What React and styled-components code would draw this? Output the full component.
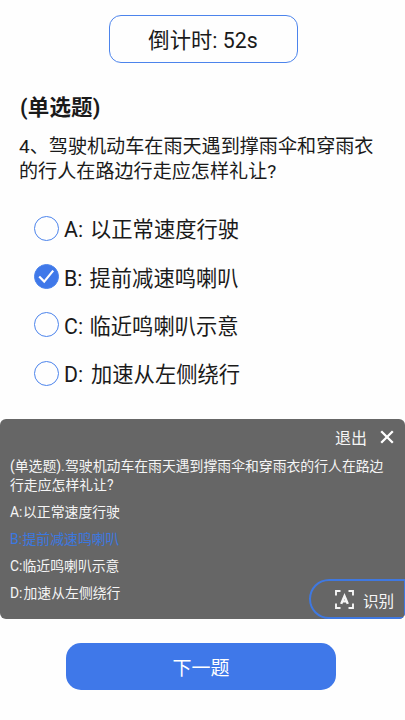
import React from "react";
import styled, { createGlobalStyle } from "styled-components";

const GlobalStyle = createGlobalStyle`
    * {
        box-sizing: border-box;
    }

    body {
        margin: 0;
        background: #fefefe;
        color: #1a1a1a;
        font-family: "Noto Sans CJK SC", "Noto Sans", sans-serif;
    }

    button {
        font-family: inherit;
        padding: 0;
    }
`;

const Page = styled.div`
    display: flex;
    flex-direction: column;
    width: 405px;
    height: 720px;
    padding-top: 15px;
    overflow: hidden;
`;

const Timer = styled.div`
    display: flex;
    align-items: center;
    justify-content: center;
    align-self: center;
    width: 189px;
    height: 48px;
    margin-left: 1px;
    border: 1.4px solid #4c84ec;
    border-radius: 12px;
    font-size: 21.3px;
    line-height: 30px;
`;

const Question = styled.section`
    padding: 28px 0 0 19px;
`;

const Kind = styled.h1`
    margin: 0 0 0 1px;
    font-size: 21.5px;
    font-weight: 700;
    line-height: 30px;
    letter-spacing: 0.2px;
`;

const Title = styled.p`
    margin: 12px 0 0;
    font-size: 19.1px;
    line-height: 25px;
    white-space: nowrap;
`;

const Latin = styled.span`
    font-family: Roboto, sans-serif;
    line-height: 1;
`;

const Prefix = styled.span`
    display: inline-block;
    width: ${props => props.$width}px;
    font-family: Roboto, "Noto Sans CJK SC", sans-serif;
    line-height: 1;
    white-space: pre;
`;

const Options = styled.div`
    display: flex;
    flex-direction: column;
    padding: 21px 0 0 34px;
`;

const Option = styled.div`
    display: flex;
    align-items: center;
    height: 48.4px;
    font-size: 21.3px;
    line-height: 30px;
    white-space: nowrap;
`;

const Radio = styled.span`
    display: flex;
    align-items: center;
    justify-content: center;
    width: 25px;
    height: 25px;
    margin-right: 5px;
    border: 1.4px solid #4c84ec;
    border-radius: 50%;
    background: ${props => (props.$checked ? "#3f78e9" : "transparent")};
`;

const Panel = styled.section`
    display: flex;
    flex-direction: column;
    height: 200px;
    margin-top: 21px;
    border-radius: 6px;
    background: #666;
    color: #f5f5f5;
    overflow: hidden;
`;

const PanelBar = styled.div`
    display: flex;
    align-items: center;
    justify-content: flex-end;
    gap: 13px;
    height: 37px;
    padding-right: 11px;
    font-size: 16px;
`;

const PanelTitle = styled.p`
    margin: 0;
    padding-left: 10px;
    font-size: 13.85px;
    line-height: 19px;
    white-space: nowrap;
`;

const PanelFooter = styled.div`
    display: flex;
    justify-content: space-between;
    align-items: flex-end;
    flex: 1;
`;

const Answers = styled.div`
    align-self: flex-start;
    padding: 4px 0 0 10px;
`;

const Answer = styled.div`
    height: 27.2px;
    font-size: 13.85px;
    line-height: 27.2px;
    color: ${props => (props.$active ? "#3b78e0" : "inherit")};
`;

const ScanButton = styled.button`
    display: flex;
    align-items: center;
    gap: 9px;
    width: 96px;
    height: 40px;
    padding: 2px 0 0 24px;
    border: 2px solid #3f78e0;
    border-right-width: 1px;
    border-radius: 20px 0 0 20px;
    background: transparent;
    color: #f5f5f5;
    font-size: 15.6px;
`;

const NextButton = styled.button`
    align-self: center;
    width: 270px;
    height: 47px;
    margin: 24px 0 0 -3px;
    border: 0;
    border-radius: 15px;
    background: #3f78e9;
    color: #fff;
    font-size: 19px;
`;

const CheckIcon = () => (
    <svg width="23" height="23" viewBox="0 0 23 23" fill="none" style={{ flex: "none" }}>
        <path d="M4.2 11.4l5 5.2 9-11" stroke="#fff" strokeWidth="2.2" />
    </svg>
);

const CloseIcon = () => (
    <svg width="14" height="14" viewBox="0 0 14 14">
        <path d="M1.2 1.2l11.6 11.6M12.8 1.2L1.2 12.8" stroke="#fff" strokeWidth="2.3" />
    </svg>
);

const ScanIcon = () => (
    <svg width="19" height="19" viewBox="0 0 19 19" fill="none" stroke="#f5f5f5">
        <path d="M1 5.5V1h4.5M13.5 1H18v4.5M18 13.5V18h-4.5M5.5 18H1v-4.5" strokeWidth="1.9" />
        <path d="M6.2 13.9L9.5 6l3.3 7.9M7.6 11.4h3.8" strokeWidth="2.4" />
    </svg>
);

const options = [
    { key: "A", text: "以正常速度行驶", prefix: 26, small: 13 },
    { key: "B", text: "提前减速鸣喇叭", prefix: 25.5, small: 12.5 },
    { key: "C", text: "临近鸣喇叭示意", prefix: 25.5, small: 12.5 },
    { key: "D", text: "加速从左侧绕行", prefix: 27, small: 13.5 }
];

const selected = "B";

const App = () => {
    return (
        <>
            <GlobalStyle />
            <Page>
                <Timer>
                    <span>
                        倒计时<Latin>: 52s</Latin>
                    </span>
                </Timer>
                <Question>
                    <Kind>
                        <Latin>(</Latin>单选题<Latin>)</Latin>
                    </Kind>
                    <Title>
                        <Latin>4</Latin>、驾驶机动车在雨天遇到撑雨伞和穿雨衣
                        <br />
                        的行人在路边行走应怎样礼让<Latin>?</Latin>
                    </Title>
                </Question>
                <Options>
                    {options.map(({ key, text, prefix }) => (
                        <Option key={key}>
                            <Radio $checked={key === selected}>
                                {key === selected && <CheckIcon />}
                            </Radio>
                            <span>
                                <Prefix $width={prefix}>{key}: </Prefix>
                                {text}
                            </span>
                        </Option>
                    ))}
                </Options>
                <Panel>
                    <PanelBar>
                        <span>退出</span>
                        <CloseIcon />
                    </PanelBar>
                    <PanelTitle>
                        <Prefix $width={55}>(单选题).</Prefix>
                        驾驶机动车在雨天遇到撑雨伞和穿雨衣的行人在路边
                        <br />
                        行走应怎样礼让<Latin>?</Latin>
                    </PanelTitle>
                    <PanelFooter>
                        <Answers>
                            {options.map(({ key, text, small }) => (
                                <Answer key={key} $active={key === selected}>
                                    <Prefix $width={small}>{key}:</Prefix>
                                    {text}
                                </Answer>
                            ))}
                        </Answers>
                        <ScanButton>
                            <ScanIcon />
                            识别
                        </ScanButton>
                    </PanelFooter>
                </Panel>
                <NextButton>下一题</NextButton>
            </Page>
        </>
    );
};

export default App;
